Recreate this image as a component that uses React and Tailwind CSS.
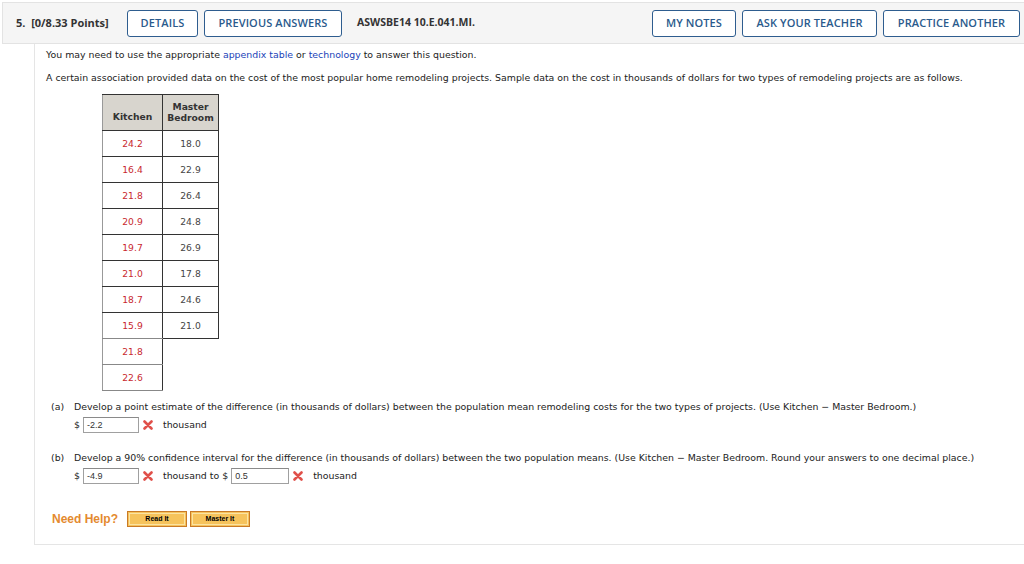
import React from "react";

const F = { fontFamily: '"DejaVu Sans", Verdana, sans-serif' };
const OS = { fontFamily: '"Open Sans", "Noto Sans", sans-serif' };
const AR = { fontFamily: '"Liberation Sans", Arial, sans-serif' };

function Btn({ children, w }) {
  return (
    <div
      className={`h-[27px] ${w} flex items-center justify-center border border-[#2e5d8f] rounded-[3px] bg-white text-[#2a5a8c] text-[11px] font-semibold tracking-[0.1px]`}
      style={OS}
    >
      {children}
    </div>
  );
}

function XMark() {
  return (
    <svg width="10" height="10" viewBox="0 0 10 10" className="shrink-0 block">
      <path d="M1.5 1.5 L8.5 8.5 M8.5 1.5 L1.5 8.5" stroke="#e0504a" strokeWidth="2.6" strokeLinecap="round" />
    </svg>
  );
}

function Input({ value, w }) {
  return (
    <div className={`${w} h-[16px] border border-[#a0a0a0] border-t-[#8a8a8a] bg-white text-[9px] leading-[14px] pl-[3px] text-[#333]`} style={AR}>
      {value}
    </div>
  );
}

const rows = [
  ["24.2", "18.0"],
  ["16.4", "22.9"],
  ["21.8", "26.4"],
  ["20.9", "24.8"],
  ["19.7", "26.9"],
  ["21.0", "17.8"],
  ["18.7", "24.6"],
  ["15.9", "21.0"],
  ["21.8", null],
  ["22.6", null],
];

export default function App() {
  return (
    <div className="w-[1024px] h-[564px] bg-white relative overflow-hidden text-[#222]" style={F}>
      <div className="pt-[2px] pl-[2px]">
        <div className="h-[42px] bg-[#f5f5f5] border border-[#e3e3e3] border-r-0 flex items-center pl-[13px]">
          <div className="text-[11px] font-bold text-[#333] w-[111px] whitespace-nowrap" style={OS}>5.&nbsp; [0/8.33 Points]</div>
          <Btn w="w-[71px]">DETAILS</Btn>
          <div className="w-[6px]" />
          <Btn w="w-[138px]">PREVIOUS ANSWERS</Btn>
          <div className="ml-[15px] text-[10.5px] font-bold text-[#333] whitespace-nowrap" style={OS}>ASWSBE14 10.E.041.MI.</div>
          <div className="flex-1" />
          <Btn w="w-[84px]">MY NOTES</Btn>
          <div className="w-[6px]" />
          <Btn w="w-[135px]">ASK YOUR TEACHER</Btn>
          <div className="w-[6px]" />
          <Btn w="w-[137px]">PRACTICE ANOTHER</Btn>
          <div className="w-[4px]" />
        </div>
      </div>
      <div className="ml-[34px] border-l border-b border-[#e5e5e5] h-[501px] pl-[11px] text-[9.4px] text-[#222]">
        <div className="pt-[5px] leading-[12px]">
          You may need to use the appropriate <span className="text-[#1a3fb8]">appendix table</span> or{" "}
          <span className="text-[#1a3fb8]">technology</span> to answer this question.
        </div>
        <div className="pt-[11px] leading-[12px] whitespace-nowrap">
          A certain association provided data on the cost of the most popular home remodeling projects. Sample data on the cost in thousands of dollars for two types of remodeling projects are as follows.
        </div>
        <div className="ml-[56px] mt-[10px]">
          <table className="border-collapse text-[9.2px]">
            <thead>
              <tr className="h-[36px] bg-[#d8d5ce]">
                <th className="w-[60px] p-0 border border-[#333] border-l-[#999] font-bold text-[#333] align-bottom pb-[6px]">Kitchen</th>
                <th className="w-[56px] p-0 border border-[#333] font-bold text-[#333] leading-[11px] align-bottom pb-[7px]">Master<br />Bedroom</th>
              </tr>
            </thead>
            <tbody>
              {rows.map((r, i) => (
                <tr key={i} className="h-[26px]">
                  <td className={`p-0 border border-[#333] border-l-[#999] text-center text-[#c8282e] ${i >= 7 ? "border-b-[#888]" : ""}`}>{r[0]}</td>
                  {r[1] ? (
                    <td className="p-0 border border-[#333] text-center text-[#444]">{r[1]}</td>
                  ) : (
                    <td className={`p-0 border-l border-l-[#333] ${i === 8 ? "border-t border-t-[#333]" : ""}`}></td>
                  )}
                </tr>
              ))}
            </tbody>
          </table>
        </div>
        <div className="ml-[5px] mt-[10px]">
          <div className="flex leading-[12px] whitespace-nowrap">
            <span className="w-[23px]">(a)</span>
            <span>Develop a point estimate of the difference (in thousands of dollars) between the population mean remodeling costs for the two types of projects. (Use Kitchen − Master Bedroom.)</span>
          </div>
          <div className="flex items-center ml-[23px] mt-[4px] h-[16px]">
            <span className="w-[9px]">$</span>
            <Input value="-2.2" w="w-[56px]" />
            <span className="ml-[4px]"><XMark /></span>
            <span className="ml-[10px]">thousand</span>
          </div>
          <div className="flex leading-[12px] mt-[19px] whitespace-nowrap">
            <span className="w-[23px]">(b)</span>
            <span>Develop a 90% confidence interval for the difference (in thousands of dollars) between the two population means. (Use Kitchen − Master Bedroom. Round your answers to one decimal place.)</span>
          </div>
          <div className="flex items-center ml-[23px] mt-[4px] h-[16px]">
            <span className="w-[9px]">$</span>
            <Input value="-4.9" w="w-[56px]" />
            <span className="ml-[4px]"><XMark /></span>
            <span className="ml-[10px]">thousand to $</span>
            <span className="ml-[3px]"><Input value="0.5" w="w-[58px]" /></span>
            <span className="ml-[4px]"><XMark /></span>
            <span className="ml-[10px]">thousand</span>
          </div>
        </div>
        <div className="flex items-center mt-[26px] ml-[6px]">
          <span className="text-[12px] font-bold text-[#e48a2f] w-[75px]" style={AR}>Need Help?</span>
          <div className="w-[60px] h-[16px] border border-[#c97a26] bg-[#f6c35c] p-[1px]">
            <div className="w-full h-full border border-[#fbe3a3] flex items-center justify-center text-[7px] font-bold text-black" style={AR}>Read It</div>
          </div>
          <div className="w-[3px]" />
          <div className="w-[60px] h-[16px] border border-[#c97a26] bg-[#f6c35c] p-[1px]">
            <div className="w-full h-full border border-[#fbe3a3] flex items-center justify-center text-[7px] font-bold text-black" style={AR}>Master It</div>
          </div>
        </div>
      </div>
    </div>
  );
}
